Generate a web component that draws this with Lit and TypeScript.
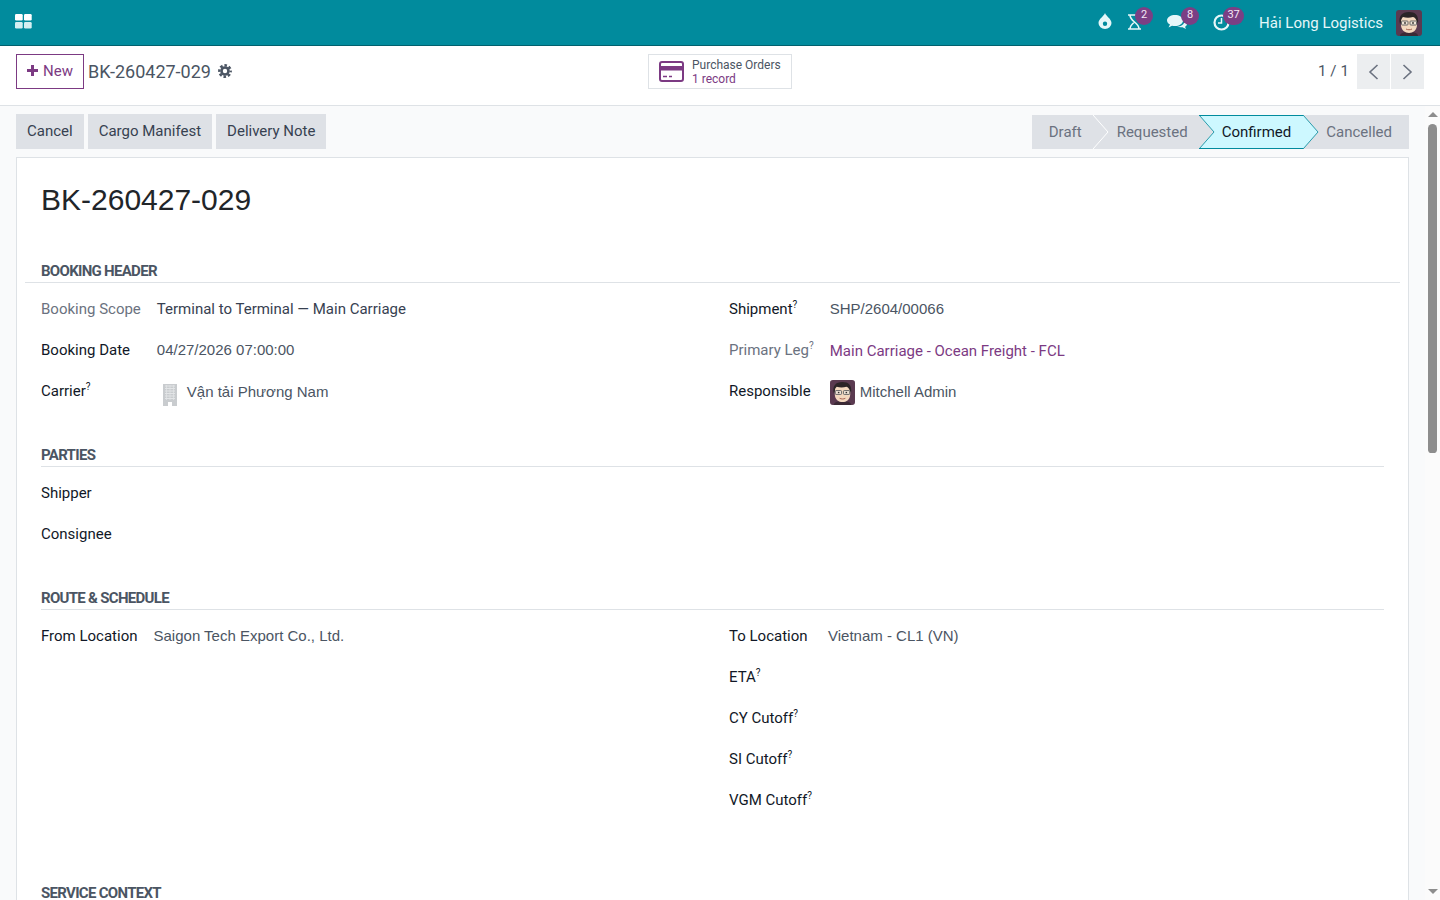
import { LitElement, html, css } from "lit";
import { customElement } from "lit/decorators.js";

const avatar = (size: number) => html`<svg class="avatar" width=${size} height=${size} viewBox="0 0 26 26">
  <rect width="26" height="26" rx="3" fill="#5a3a50"/>
  <path d="M4 26c0-3 4-4 9-4s9 1 9 4z" fill="#3b2a35"/>
  <path d="M5 10c0-4 4-5 8-5s8 1 8 5v5c0 5-4 8-8 8s-8-3-8-8z" fill="#f3d8bf"/>
  <path d="M4 14C2 6 6 2 13 2c6 0 10 3 9 11l-1.500-2c-.5-2-1.500-3.500-3.500-4-3 1-7 1-10 0-1.500 1-2 3-2 5z" fill="#2b2427"/>
  <rect x="5.500" y="11" width="6.500" height="4" rx=".8" fill="#efe3d6" stroke="#55585a" stroke-width=".9"/>
  <rect x="14" y="11" width="6.500" height="4" rx=".8" fill="#efe3d6" stroke="#55585a" stroke-width=".9"/>
  <circle cx="9" cy="13" r=".9" fill="#33302f"/>
  <circle cx="17" cy="13" r=".9" fill="#33302f"/>
  <path d="M10 19c2 1 4 1 6 0" stroke="#a5614f" stroke-width="1" fill="none"/>
</svg>`;

const building = html`<svg class="building" width="14" height="22" viewBox="0 0 14 22">
  <path d="M0 0h14v22H9v-4H5v4H0z" fill="#c9cccf"/>
  <path d="M2 2h10M2 4.500h10M2 7h10M2 9.500h10M2 12h10M2 14.500h10" stroke="#e3e5e7" stroke-width="1"/>
  <path d="M3.500 1v15M7 1v15M10.500 1v15" stroke="#e3e5e7" stroke-width=".7"/>
</svg>`;

@customElement("app-root")
export class AppRoot extends LitElement {
  static styles = css`
    :host {
      display: flex;
      flex-direction: column;
      height: 100vh;
      overflow: hidden;
      font-family: Roboto, "Noto Sans", sans-serif;
      font-size: 15px;
      color: #374151;
      background: #fff;
    }
    .nav {
      flex: none;
      height: 45px;
      background: #018b9d;
      border-bottom: 1px solid #01606d;
      display: flex;
      align-items: center;
      padding: 0 18px 0 15px;
      color: #e6f7f9;
    }
    .apps { display: block; margin-top: -3px; }
    .spacer { flex: 1; }
    .sys { position: relative; display: flex; align-items: center; height: 45px; }
    .sys svg { display: block; margin-top: -1px; }
    .sys svg.drop { margin-right: 15px; margin-top: -4px; }
    .sys svg.hour { margin-right: 25px; }
    .sys svg.chat { margin-right: 26px; }
    .sys svg.clock { margin-right: 29px; }
    .badge {
      position: absolute;
      top: 7px;
      min-width: 18px;
      height: 18px;
      padding: 0 3px;
      box-sizing: border-box;
      border-radius: 9px;
      background: #7b3f84;
      color: #f4e9f6;
      font-size: 11px;
      line-height: 15px;
      text-align: center;
    }
    .b2 { left: 37px; }
    .b8 { left: 83px; }
    .b37 { left: 125px; min-width: 21px; }
    .uname { font-size: 15px; margin-right: 13px; color: #e6f7f9; }
    .avatar { display: block; flex: none; }

    .cp {
      flex: none;
      height: 60px;
      box-sizing: border-box;
      padding: 8px 16px 0;
      border-bottom: 1px solid #dee2e6;
      display: grid;
      grid-template-columns: 1fr auto 1fr;
      align-items: start;
      background: #fff;
    }
    .cp-left { display: flex; align-items: center; height: 35px; }
    .new {
      box-sizing: border-box;
      height: 35px;
      width: 68px;
      padding-bottom: 2px;
      border: 1px solid #7c3a83;
      color: #7c3a83;
      display: flex;
      align-items: center;
      justify-content: center;
      gap: 3px;
      font-size: 15px;
      background: #fff;
    }
    .new svg { margin: 0 1px 0 -1px; }
    .crumb { margin-left: 4px; font-size: 18px; color: #4b5563; }
    .gear { margin: -2px 0 0 7px; display: block; }
    .smart {
      box-sizing: border-box;
      width: 144px;
      height: 35px;
      border: 1px solid #dee2e6;
      display: flex;
      align-items: center;
      gap: 8px;
      padding-left: 10px;
      font-size: 12px;
      line-height: 14px;
      background: #fff;
    }
    .smart-text { color: #4b5563; }
    .smart-sub { color: #7c3a83; }
    .cp-right { display: flex; justify-content: flex-end; align-items: center; height: 35px; gap: 1px; }
    .pager-text { margin-right: 7px; padding-bottom: 2px; font-size: 15px; color: #4b5563; letter-spacing: .1px; }
    .pg {
      width: 33px;
      height: 35px;
      background: #eceef0;
      display: flex;
      align-items: center;
      justify-content: center;
    }

    .body { flex: 1; min-height: 0; display: flex; background: #f9fafb; }
    .main { flex: 1; min-width: 0; overflow: hidden; padding: 8px 16px 0; }
    .bar { display: flex; justify-content: space-between; align-items: center; height: 35px; margin-bottom: 8px; }
    .actions { display: flex; gap: 4px; }
    .btn {
      height: 35px;
      box-sizing: border-box;
      padding: 0 11px 2px;
      display: flex;
      align-items: center;
      background: #dee1e6;
      color: #374151;
      font-size: 15px;
    }
    .status { display: flex; height: 34px; margin-top: 1px; background: #dee1e6; color: #6b7280; }
    .st { position: relative; display: flex; align-items: center; padding: 0 11px 0 24px; font-size: 15px; }
    .st:first-child { padding-left: 17px; }
    .st:last-child { padding-right: 17px; }
    .st span { position: relative; }
    .st svg { position: absolute; top: 0; left: 0; }
    .st.cur { color: #111827; padding-left: 23px; }

    .sheet {
      box-sizing: border-box;
      border: 1px solid #dee2e6;
      background: #fff;
      padding: 24px 24px 0;
      min-height: 800px;
    }
    h1 {
      margin: 0;
      font: 400 30px/36px "Liberation Sans", Arial, sans-serif;
      color: #212529;
    }
    .sec {
      font-size: 15px;
      font-weight: 700;
      line-height: 22px;
      letter-spacing: -0.7px;
      color: #4b5563;
      border-bottom: 1px solid #dee2e6;
      margin-top: 33px;
    }
    .sec.wide { margin: 42px -16px 0; padding: 0 16px; }
    .sec.far { margin-top: 62px; }
    .cols { display: grid; grid-template-columns: 688px 1fr; padding-top: 5px; }
    .grp {
      display: grid;
      grid-template-columns: max-content 1fr;
      column-gap: 16px;
      grid-auto-rows: 41px;
      align-items: center;
      align-content: start;
    }
    .lb { color: #111827; white-space: nowrap; }
    .lb.mut { color: #6b7280; }
    .lb sup { font-size: 10px; line-height: 0; vertical-align: 6px; }
    .val { white-space: nowrap; color: #374151; }
    .val.ar { font-family: "Liberation Sans", Arial, sans-serif; color: #4b5563; }
    .val.link { color: #7c3a83; padding-top: 2px; }
    .many2 { display: flex; align-items: center; padding-top: 2px; }
    .many2 .building { margin: 6px 10px 0 6px; }
    .many2 .avatar { margin: 2px 5px 0 0; }

    .sb { flex: none; width: 15px; background: #fbfbfb; display: flex; flex-direction: column; align-items: center; }
    .up { width: 0; height: 0; margin-top: 6px; border: 5px solid transparent; border-top: 0; border-bottom-color: #8d8d8d; }
    .thumb { width: 9px; height: 329px; margin-top: 7px; border-radius: 5px 5px 4px 4px; background: #8d8d8d; }
    .dn { width: 0; height: 0; margin-top: auto; margin-bottom: 6px; border: 5px solid transparent; border-bottom: 0; border-top-color: #8d8d8d; }
  `;

  private sys() {
    return html`
      <div class="sys">
        <svg class="drop" width="14" height="16" viewBox="0 0 14 16" fill="#e6f7f9"><path d="M7 0c1 3 6.500 6 6.500 10a6.500 6 0 0 1-13 0C.5 6 6 3 7 0zM7 8.500a2.200 2.200 0 0 0 0 4.400 2.200 2.200 0 0 0 0-4.400z" fill-rule="evenodd"/></svg>
        <svg class="hour" width="15" height="16" viewBox="0 0 15 16" fill="none" stroke="#e6f7f9" stroke-width="1.600"><path d="M1 1h13M1 15h13M3 1c0 3 2 5 4.500 7C10 10 12 12 12 15H3c0-3 2-5 4.500-7" /></svg>
        <span class="badge b2">2</span>
        <svg class="chat" width="20" height="16" viewBox="0 0 20 16" fill="#e6f7f9"><path d="M8 1c4 0 8 2 8 5.500S12 12 8 12c-1 0-2 0-3-.300L1.500 13.500 3 10.500C1 9.500 0 8 0 6.500 0 3 4 1 8 1z"/><path d="M17.500 6.500c1.500 1 2.500 2 2.500 3.500 0 1-.7 2-2 2.800l1 2.200-3.500-1.800c-2 .3-4 0-5.500-.7 4 0 7.500-2 7.500-6z"/></svg>
        <span class="badge b8">8</span>
        <svg class="clock" width="17" height="17" viewBox="0 0 17 17" fill="none" stroke="#e6f7f9" stroke-width="2.200"><circle cx="8.500" cy="8.500" r="7"/><path d="M8.500 4v5H5" stroke-width="1.500"/></svg>
        <span class="badge b37">37</span>
      </div>`;
  }

  private gear() {
    return html`<svg class="gear" width="14" height="14" viewBox="0 0 14 14" fill="none" stroke="#4b5563">
      <circle cx="7" cy="7" r="3.500" stroke-width="2.600"/>
      <circle cx="7" cy="7" r="5.700" stroke-width="2.400" stroke-dasharray="2.600 1.877" stroke-dashoffset="1.300"/>
    </svg>`;
  }

  private field(label: string, value: unknown, opts: { sup?: boolean; mut?: boolean; cls?: string } = {}) {
    return html`
      <div class="lb ${opts.mut ? "mut" : ""}">${label}${opts.sup ? html`<sup>?</sup>` : ""}</div>
      <div class="val ${opts.cls ?? ""}">${value}</div>`;
  }

  render() {
    return html`
      <div class="nav">
        <svg class="apps" width="17" height="15" viewBox="0 0 17 15">
          <rect x="0" y="0" width="7.700" height="6.500" rx="1.200" fill="#fff"/>
          <rect x="9" y="0" width="7.700" height="6.500" rx="1.200" fill="#fff"/>
          <rect x="0" y="8" width="7.700" height="6.500" rx="1.200" fill="#d4eff2"/>
          <rect x="9" y="8" width="7.700" height="6.500" rx="1.200" fill="#d4eff2"/>
        </svg>
        <div class="spacer"></div>
        ${this.sys()}
        <span class="uname">Hải Long Logistics</span>
        ${avatar(26)}
      </div>

      <div class="cp">
        <div class="cp-left">
          <div class="new">
            <svg width="13" height="13" viewBox="0 0 13 13" fill="#7c3a83"><path d="M5 1h3v4h4v3H8v4H5V8H1V5h4z"/></svg>
            <span>New</span>
          </div>
          <span class="crumb">BK-260427-029</span>
          ${this.gear()}
        </div>
        <div class="smart">
          <svg width="25" height="21" viewBox="0 0 25 21" fill="none">
            <rect x="1" y="1" width="23" height="19" rx="2" stroke="#7c3a83" stroke-width="2"/>
            <rect x="1" y="5" width="23" height="4.500" fill="#7c3a83"/>
            <path d="M4 15.500h4M10 15.500h3" stroke="#7c3a83" stroke-width="1.500"/>
          </svg>
          <div class="smart-text"><div>Purchase Orders</div><div class="smart-sub">1 record</div></div>
        </div>
        <div class="cp-right">
          <span class="pager-text">1 / 1</span>
          <div class="pg"><svg width="11" height="16" viewBox="0 0 11 16" fill="none" stroke="#6b7280" stroke-width="1.600"><path d="M9.500 1 2 8l7.500 7"/></svg></div>
          <div class="pg"><svg width="11" height="16" viewBox="0 0 11 16" fill="none" stroke="#6b7280" stroke-width="1.600"><path d="M1.500 1 9 8l-7.500 7"/></svg></div>
        </div>
      </div>

      <div class="body">
        <div class="main">
          <div class="bar">
            <div class="actions">
              <div class="btn">Cancel</div>
              <div class="btn">Cargo Manifest</div>
              <div class="btn">Delivery Note</div>
            </div>
            <div class="status">
              <div class="st"><span>Draft</span></div>
              <div class="st">
                <svg width="16" height="34" viewBox="0 0 16 34" fill="none"><path d="M0 0 15 17 0 34" stroke="#fff"/></svg>
                <span>Requested</span>
              </div>
              <div class="st cur">
                <svg width="120" height="34" viewBox="0 0 120 34"><path d="M.500 .500H104.500L119 17 104.500 33.500H.500L15 17z" fill="#cdf8ff" stroke="#2a9cab" stroke-width="1"/><path d="M0 .500H104.500M0 33.500H104.500" stroke="#018b9d"/></svg>
                <span>Confirmed</span>
              </div>
              <div class="st"><span>Cancelled</span></div>
            </div>
          </div>

          <div class="sheet">
            <h1>BK-260427-029</h1>

            <div class="sec wide">BOOKING HEADER</div>
            <div class="cols">
              <div class="grp">
                ${this.field("Booking Scope", "Terminal to Terminal — Main Carriage", { mut: true })}
                ${this.field("Booking Date", "04/27/2026 07:00:00", { cls: "ar" })}
                ${this.field("Carrier", html`<div class="many2">${building}<span>Vận tải Phương Nam</span></div>`, { sup: true, cls: "ar" })}
              </div>
              <div class="grp">
                ${this.field("Shipment", "SHP/2604/00066", { sup: true, cls: "ar" })}
                ${this.field("Primary Leg", "Main Carriage - Ocean Freight - FCL", { sup: true, mut: true, cls: "link" })}
                ${this.field("Responsible", html`<div class="many2">${avatar(25)}<span>Mitchell Admin</span></div>`, { cls: "ar" })}
              </div>
            </div>

            <div class="sec">PARTIES</div>
            <div class="cols">
              <div class="grp">
                ${this.field("Shipper", "")}
                ${this.field("Consignee", "")}
              </div>
            </div>

            <div class="sec">ROUTE &amp; SCHEDULE</div>
            <div class="cols">
              <div class="grp">
                ${this.field("From Location", "Saigon Tech Export Co., Ltd.", { cls: "ar" })}
              </div>
              <div class="grp">
                ${this.field("To Location", "Vietnam - CL1 (VN)", { cls: "ar" })}
                ${this.field("ETA", "", { sup: true })}
                ${this.field("CY Cutoff", "", { sup: true })}
                ${this.field("SI Cutoff", "", { sup: true })}
                ${this.field("VGM Cutoff", "", { sup: true })}
              </div>
            </div>

            <div class="sec far">SERVICE CONTEXT</div>
          </div>
        </div>
        <div class="sb">
          <div class="up"></div>
          <div class="thumb"></div>
          <div class="dn"></div>
        </div>
      </div>
    `;
  }
}
